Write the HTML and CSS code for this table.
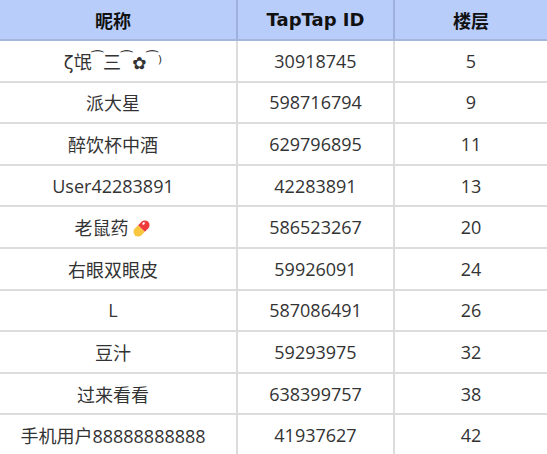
FILE: index.html
```html
<!DOCTYPE html>
<html lang="zh">
<head>
<meta charset="utf-8">
<link rel="stylesheet" href="styles.css">
</head>
<body>
<div class="wrap">
<table class="tbl">
  <colgroup><col class="c1"><col class="c2"><col class="c3"></colgroup>
  <thead>
    <tr><th>昵称</th><th>TapTap ID</th><th>楼层</th></tr>
  </thead>
  <tbody>
    <tr><td class="fancy">ζ氓<span class="tie">⁀</span>三<span class="tie">⁀</span><span class="flower">✿</span><span class="tie">⁀</span>⁾</td><td>30918745</td><td>5</td></tr>
    <tr><td>派大星</td><td>598716794</td><td>9</td></tr>
    <tr><td>醉饮杯中酒</td><td>629796895</td><td>11</td></tr>
    <tr><td>User42283891</td><td>42283891</td><td>13</td></tr>
    <tr><td>老鼠药<svg class="pill" viewBox="0 0 20 20" width="21" height="21"><g transform="rotate(-45 10 10)"><path d="M10 5.5 H5.5 a4.5 4.5 0 0 0 0 9 H10 Z" fill="#f9c640"/><path d="M10 5.5 H14.5 a4.5 4.5 0 0 1 0 9 H10 Z" fill="#ef3b3b"/><ellipse cx="14.8" cy="8" rx="1.4" ry="1" fill="#fff"/></g></svg></td><td>586523267</td><td>20</td></tr>
    <tr><td>右眼双眼皮</td><td>59926091</td><td>24</td></tr>
    <tr><td>L</td><td>587086491</td><td>26</td></tr>
    <tr><td>豆汁</td><td>59293975</td><td>32</td></tr>
    <tr><td>过来看看</td><td>638399757</td><td>38</td></tr>
    <tr><td>手机用户88888888888</td><td>41937627</td><td>42</td></tr>
  </tbody>
</table>
</div>
</body>
</html>
```
FILE: styles.css
```css
html, body {
  margin: 0;
  padding: 0;
  background: #fff;
  overflow: hidden;
}
.wrap {
  margin-left: -10px;
  width: 557px;
}
.tbl {
  width: 557px;
  border-collapse: collapse;
  table-layout: fixed;
  font-family: "Open Sans", "Noto Sans CJK SC", sans-serif;
  font-size: 18px;
  color: #333;
}
.c1 { width: 247px; }
.c2 { width: 157px; }
.c3 { width: 153px; }
.tbl th {
  height: 39px;
  padding: 0;
  background: #b9cdfb;
  color: #111;
  font-family: "DejaVu Sans", "Noto Sans CJK SC", sans-serif;
  font-weight: bold;
  font-size: 18px;
  text-align: center;
  border-bottom: 2px solid #a6b6da;
  border-left: 2px solid #9db1dc;
}
.tbl th:first-child, .tbl td:first-child { border-left: none; }
.tbl td {
  height: 39.6px;
  padding: 0;
  text-align: center;
  border-bottom: 2px solid #dcdcdc;
  border-left: 2px solid #dcdcdc;
  white-space: nowrap;
}
.pill {
  vertical-align: -4px;
  margin-left: 2px;
}
.fancy {
  font-family: "DejaVu Sans", "Noto Sans CJK SC", sans-serif;
}
.tie {
  font-size: 14px;
  vertical-align: 6px;
}
.flower {
  font-size: 17px;
}
```
